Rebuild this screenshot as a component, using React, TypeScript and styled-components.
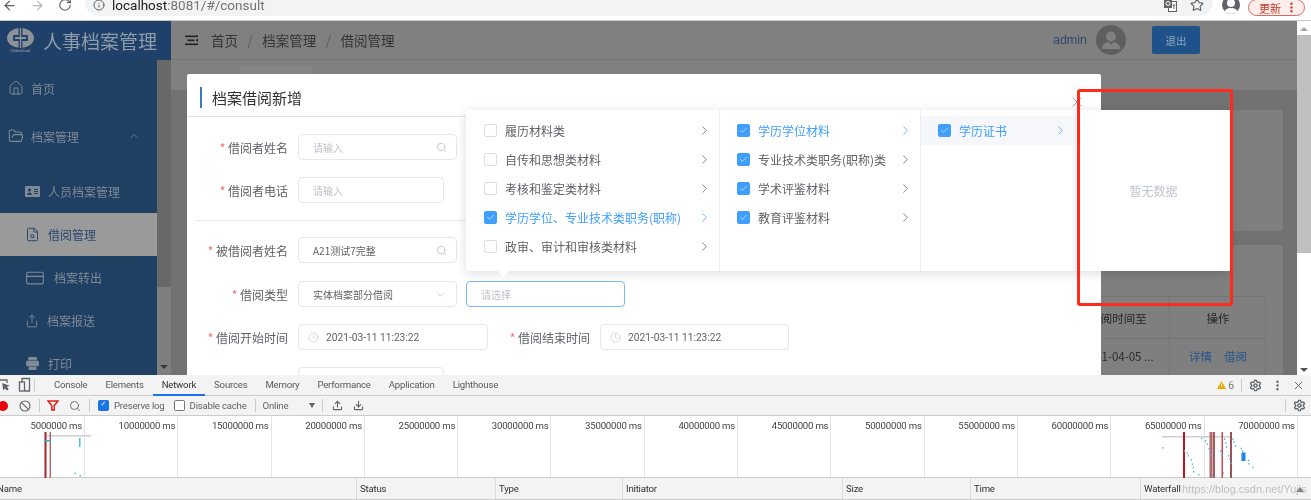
import React from "react";
import styled, { createGlobalStyle } from "styled-components";
import {
  ArrowLeft,
  ArrowRight,
  Ban,
  ChevronDown,
  ChevronRight,
  ChevronUp,
  Clock,
  CreditCard,
  Download,
  FileSearch,
  FolderOpen,
  Home,
  Info,
  MoreVertical,
  RotateCw,
  Search,
  Settings,
  Share,
  Star,
  Upload,
  X,
  Check,
} from "lucide-react";

const GlobalStyle = createGlobalStyle`
  html, body { margin: 0; padding: 0; background: #fff; }
  * { box-sizing: border-box; }
  body { font-family: "Noto Sans CJK SC", "Liberation Sans", sans-serif; }
`;

const Page = styled.div`
  width: 1311px;
  height: 500px;
  display: flex;
  flex-direction: column;
  overflow: hidden;
  position: relative;
  filter: blur(0.45px);
`;

/* browser toolbar */
const ChromeBar = styled.div`
  height: 21px;
  flex: none;
  background: #fff;
  border-bottom: 1px solid #c8c8c8;
  display: flex;
  align-items: flex-start;
  overflow: hidden;
`;
const NavButton = styled.div<{ $off?: boolean }>`
  width: 27.5px;
  height: 10px;
  display: flex;
  align-items: center;
  justify-content: center;
  color: ${(p) => (p.$off ? "#b6b9bd" : "#5f6368")};
  svg {
    flex: none;
  }
`;
const NavGroup = styled.div`
  width: 85px;
  flex: none;
  display: flex;
  margin-left: -4px;
  margin-right: 4px;
`;
const UrlPill = styled.div`
  width: 1128px;
  height: 16px;
  flex: none;
  background: #f1f3f4;
  border-radius: 0 0 14px 14px;
  display: flex;
  align-items: center;
  justify-content: space-between;
  padding: 0 9px 6px 8px;
  color: #5f6368;
  overflow: hidden;
`;
const UrlLeft = styled.div`
  display: flex;
  align-items: center;
  gap: 7px;
`;
const UrlText = styled.span`
  font-family: "Roboto", sans-serif;
  font-size: 13.5px;
  line-height: 10px;
  color: #70757a;
  b {
    font-weight: 400;
    color: #202124;
  }
`;
const UrlRight = styled.div`
  display: flex;
  align-items: center;
  gap: 13px;
`;
const ProfileDot = styled.div`
  width: 18px;
  height: 18px;
  margin: -4px 8px 0 9px;
  border-radius: 50%;
  background: #5f6368;
  flex: none;
  position: relative;
  overflow: hidden;
  &::before {
    content: "";
    position: absolute;
    left: 5px;
    top: 3px;
    width: 8px;
    height: 8px;
    border-radius: 50%;
    background: #fff;
  }
  &::after {
    content: "";
    position: absolute;
    left: 2px;
    top: 12px;
    width: 14px;
    height: 10px;
    border-radius: 50%;
    background: #fff;
  }
`;
const UpdatePill = styled.div`
  width: 57px;
  height: 17px;
  margin-top: -1px;
  flex: none;
  border: 1px solid #d9695f;
  border-radius: 9px;
  background: #fdeeec;
  color: #c5392c;
  font-size: 11px;
  line-height: 14px;
  display: flex;
  align-items: center;
  justify-content: space-between;
  padding: 0 6px 0 10px;
  svg {
    flex: none;
  }
`;

/* dimmed application */
const Workspace = styled.div`
  height: 354px;
  flex: none;
  display: flex;
  position: relative;
  overflow: hidden;
  background: #808080;
`;
const Sidebar = styled.aside`
  width: 171px;
  flex: none;
  display: flex;
  flex-direction: column;
`;
const LogoBar = styled.div`
  height: 39px;
  flex: none;
  background: #1f4068;
  display: flex;
  align-items: center;
  padding-left: 7px;
  gap: 9px;
`;
const LogoMark = styled.div`
  width: 27px;
  display: flex;
  flex-direction: column;
  align-items: center;
  color: #8c9298;
  span {
    font-family: "Liberation Sans", sans-serif;
    font-size: 4px;
    line-height: 5px;
    font-weight: 700;
    white-space: nowrap;
  }
`;
const LogoTitle = styled.div`
  font-size: 19px;
  color: #8f9cab;
  white-space: nowrap;
`;
const SideBody = styled.div`
  flex: 1;
  display: flex;
  min-height: 0;
`;
const Menu = styled.nav`
  width: 157px;
  flex: none;
  background: #1f3f63;
  padding-top: 4px;
`;
const MenuItem = styled.div`
  height: 48px;
  display: flex;
  align-items: center;
  padding: 0 17px 0 8px;
  gap: 7px;
  color: #7f8a96;
  font-size: 12px;
  svg {
    flex: none;
  }
`;
const MenuCaret = styled.span`
  margin-left: auto;
  display: flex;
`;
const SubMenu = styled.div`
  margin-top: 10px;
`;
const SubItem = styled.div<{ $active?: boolean; $wide?: boolean }>`
  height: 43px;
  display: flex;
  align-items: center;
  padding-left: 25px;
  gap: ${(p) => (p.$wide ? "9px" : "8px")};
  font-size: 12px;
  color: ${(p) => (p.$active ? "#27476b" : "#7f8a96")};
  background: ${(p) => (p.$active ? "#9a9a9a" : "transparent")};
  svg {
    flex: none;
  }
`;
const SideScroll = styled.div`
  width: 14px;
  flex: none;
  display: flex;
  flex-direction: column;
`;
const SideThumb = styled.div`
  height: 227px;
  flex: none;
  background: #686868;
`;
const SideTrack = styled.div`
  flex: 1;
  background: #7f7f7f;
  display: flex;
  align-items: flex-end;
  justify-content: center;
  padding-bottom: 6px;
`;
const ArrowDown = styled.i`
  width: 0;
  height: 0;
  border-left: 4px solid transparent;
  border-right: 4px solid transparent;
  border-top: 4px solid #3a3a3a;
`;

const Main = styled.main`
  flex: 1;
  min-width: 0;
  display: flex;
  flex-direction: column;
`;
const TopBar = styled.header`
  height: 39px;
  flex: none;
  background: #808080;
  border-bottom: 1px solid #767676;
  display: flex;
  align-items: center;
  padding-left: 14px;
`;
const Crumbs = styled.div`
  display: flex;
  align-items: center;
  margin-left: 13px;
  font-size: 13.5px;
  color: #333;
  gap: 9.5px;
  i {
    font-style: normal;
    color: #5a5a5a;
  }
`;
const UserBox = styled.div`
  margin-left: auto;
  display: flex;
  align-items: center;
  margin-right: 97px;
`;
const UserName = styled.span`
  font-family: "Liberation Sans", sans-serif;
  font-size: 12.5px;
  color: #2f4a6d;
  margin-right: 9px;
`;
const Avatar = styled.div`
  width: 30px;
  height: 30px;
  border-radius: 50%;
  background: #5e5e5e;
  overflow: hidden;
  margin-right: 26px;
`;
const LogoutButton = styled.div`
  width: 48px;
  height: 28px;
  border-radius: 2px;
  background: #1f5288;
  color: #8ea6c2;
  font-size: 10.5px;
  display: flex;
  align-items: center;
  justify-content: center;
`;
const TabStrip = styled.div`
  height: 30px;
  flex: none;
  background: #808080;
  padding: 5px 0 0 69px;
`;
const GhostTab = styled.div`
  width: 72px;
  height: 25px;
  background: #858585;
  border-radius: 3px 3px 0 0;
`;
const Content = styled.div`
  flex: 1;
  min-height: 0;
  background: #727272;
  padding: 20px 14px 0 16px;
  display: flex;
  flex-direction: column;
  gap: 14px;
`;
const Card = styled.section<{ $h?: number }>`
  background: #7f7f7f;
  border-radius: 3px;
  flex: ${(p) => (p.$h ? "none" : "1")};
  height: ${(p) => (p.$h ? `${p.$h}px` : "auto")};
  padding: 51px 17px 0 0;
  display: flex;
  justify-content: flex-end;
`;
const Table = styled.div`
  width: 200px;
  display: grid;
  grid-template-columns: 103px 97px;
  grid-template-rows: 42px 60px;
  border-top: 1px solid #747474;
  border-right: 1px solid #747474;
`;
const Cell = styled.div<{ $head?: boolean }>`
  display: flex;
  align-items: ${(p) => (p.$head ? "center" : "flex-start")};
  padding-top: ${(p) => (p.$head ? "0" : "9px")};
  justify-content: center;
  gap: 12px;
  border-left: 1px solid #747474;
  border-bottom: 1px solid #747474;
  font-size: 11.5px;
  color: ${(p) => (p.$head ? "#262626" : "#2b2b2b")};
  white-space: nowrap;
  overflow: hidden;
`;
const TableLink = styled.span`
  color: #25558c;
`;
const PageScroll = styled.div`
  width: 14px;
  flex: none;
  background: #fff;
  display: flex;
  flex-direction: column;
  align-items: center;
`;
const PageThumb = styled.div`
  width: 14px;
  height: 218px;
  margin-top: 14px;
  background: #bfbfbf;
`;
const ArrowUpSmall = styled.i`
  position: absolute;
  top: 6px;
  width: 0;
  height: 0;
  border-left: 4px solid transparent;
  border-right: 4px solid transparent;
  border-bottom: 4px solid #a3a3a3;
`;
const ArrowDownSmall = styled(ArrowDown)`
  position: absolute;
  bottom: 3px;
  border-top-color: #505050;
`;

/* modal */
const Modal = styled.div`
  position: absolute;
  left: 187px;
  top: 53px;
  width: 914px;
  height: 340px;
  background: #fff;
  border-radius: 2px;
`;
const ModalHead = styled.div`
  height: 43px;
  border-bottom: 1px solid #dfe2e8;
  display: flex;
  align-items: center;
  padding: 4px 0 0 13px;
  font-size: 15px;
  color: #303133;
  &::before {
    content: "";
    width: 2px;
    height: 21px;
    background: #3f79c0;
    margin-right: 10px;
  }
`;
const Form = styled.div`
  padding-top: 17px;
`;
const Row = styled.div<{ $after?: number }>`
  height: 26px;
  margin-bottom: ${(p) => p.$after ?? 17}px;
  display: flex;
  align-items: center;
`;
const Label = styled.label<{ $w?: number }>`
  width: ${(p) => p.$w ?? 101}px;
  flex: none;
  text-align: right;
  font-size: 12px;
  color: #606266;
  white-space: nowrap;
  &::before {
    content: "* ";
    color: #f56c6c;
  }
`;
const Divider = styled.div`
  height: 1px;
  background: #e6e8ec;
  margin: 1px 8px 16px;
`;
const Field = styled.div<{ $w: number; $focus?: boolean; $gap?: number; $muted?: boolean }>`
  width: ${(p) => p.$w}px;
  height: 26px;
  flex: none;
  margin-left: ${(p) => p.$gap ?? 10}px;
  border: 1px solid ${(p) => (p.$focus ? "#7db8f5" : "#e4e7ed")};
  border-radius: 4px;
  display: flex;
  align-items: center;
  padding: 0 9px 0 14px;
  font-size: 10px;
  color: ${(p) => (p.$muted ? "#bcc0c8" : "#606266")};
  white-space: nowrap;
  svg {
    flex: none;
  }
`;
const FieldEnd = styled.span`
  margin-left: auto;
  display: flex;
  color: #c0c4cc;
`;
const DateField = styled(Field)`
  padding-left: 9px;
  gap: 7px;
  font-family: "Roboto", sans-serif;
  font-size: 10.2px;
  color: #606266;
`;
const CloseIcon = styled.div`
  position: absolute;
  left: 1069px;
  top: 73px;
  display: flex;
  color: #858585;
`;

/* cascader popper */
const Cascader = styled.div`
  position: absolute;
  left: 466px;
  top: 89px;
  width: 765px;
  height: 161px;
  background: #fff;
  border-radius: 3px;
  box-shadow: 0 2px 12px rgba(0, 0, 0, 0.14);
  display: flex;
  &::after {
    content: "";
    position: absolute;
    left: 33px;
    bottom: -4px;
    width: 9px;
    height: 9px;
    background: #fff;
    transform: rotate(45deg);
  }
`;
const CasColumn = styled.div<{ $w?: number }>`
  width: ${(p) => (p.$w ? `${p.$w}px` : "auto")};
  flex: ${(p) => (p.$w ? "none" : "1")};
  padding-top: 6px;
  border-right: 1px solid #eceef2;
  &:last-child {
    border-right: 0;
  }
`;
const CasRow = styled.div<{ $active?: boolean; $hover?: boolean; $pad: number }>`
  height: 29px;
  display: flex;
  align-items: center;
  padding: 0 7px 0 ${(p) => p.$pad}px;
  gap: 8px;
  font-size: 12px;
  white-space: nowrap;
  color: ${(p) => (p.$active ? "#409eff" : "#606266")};
  background: ${(p) => (p.$hover ? "#f5f7fa" : "transparent")};
`;
const CasArrow = styled.span`
  margin-left: auto;
  display: flex;
`;
const Box = styled.span<{ $on?: boolean }>`
  width: 13px;
  height: 13px;
  flex: none;
  border-radius: 2px;
  border: 1px solid ${(p) => (p.$on ? "#409eff" : "#dcdfe6")};
  background: ${(p) => (p.$on ? "#409eff" : "#fff")};
  display: flex;
  align-items: center;
  justify-content: center;
  color: #fff;
`;
const EmptyColumn = styled(CasColumn)`
  display: flex;
  align-items: center;
  justify-content: center;
  padding: 0;
  font-size: 12px;
  color: #c0c4cc;
`;
const RedBox = styled.div`
  position: absolute;
  left: 1077px;
  top: 68px;
  width: 156px;
  height: 217px;
  border: 3px solid #ff2a1a;
  border-radius: 3px;
  pointer-events: none;
`;

/* devtools */
const Devtools = styled.div`
  flex: 1;
  min-height: 0;
  display: flex;
  flex-direction: column;
  position: relative;
  background: #f3f3f3;
  font-family: "Roboto", "Liberation Sans", sans-serif;
  font-size: 9.6px;
  letter-spacing: -0.2px;
  color: #5a5a5a;
`;
const DevTabs = styled.div`
  height: 21px;
  flex: none;
  display: flex;
  align-items: stretch;
  border-bottom: 1px solid #ccc;
`;
const DevIcons = styled.div`
  width: 45px;
  flex: none;
  display: flex;
  align-items: center;
`;
const Sep = styled.i<{ $h?: number }>`
  width: 1px;
  height: ${(p) => p.$h ?? 13}px;
  background: #ccc;
  flex: none;
`;
const DevTab = styled.div<{ $active?: boolean }>`
  padding: 0 9px;
  margin-bottom: -1px;
  display: flex;
  align-items: center;
  color: ${(p) => (p.$active ? "#333" : "#5a5a5a")};
  border-bottom: 2px solid ${(p) => (p.$active ? "#1a73e8" : "transparent")};
`;
const DevRight = styled.div`
  margin-left: auto;
  display: flex;
  align-items: center;
  color: #5f6368;
`;
const WarnCount = styled.span`
  display: flex;
  align-items: center;
  gap: 2px;
  margin-right: 7px;
  font-size: 10.5px;
  color: #777;
`;
const DevToolbar = styled.div`
  height: 20px;
  flex: none;
  display: flex;
  align-items: center;
  border-bottom: 1px solid #ccc;
  color: #5f6368;
`;
const ToolGap = styled.span<{ $l?: number; $r?: number }>`
  display: flex;
  align-items: center;
  margin-left: ${(p) => p.$l ?? 0}px;
  margin-right: ${(p) => p.$r ?? 0}px;
`;
const RecordDot = styled.i`
  width: 10px;
  height: 10px;
  margin-left: -2px;
  border-radius: 50%;
  background: #e8000d;
  flex: none;
`;
const CheckLabel = styled.label<{ $on?: boolean }>`
  display: flex;
  align-items: center;
  gap: 5px;
  white-space: nowrap;
  &::before {
    content: "${(p) => (p.$on ? "✓" : "")}";
    width: 9px;
    height: 9px;
    border-radius: 1.5px;
    border: 1px solid ${(p) => (p.$on ? "#1a73e8" : "#777")};
    background: ${(p) => (p.$on ? "#1a73e8" : "#fff")};
    color: #fff;
    font-family: "DejaVu Sans", sans-serif;
    font-size: 7px;
    line-height: 7px;
    text-align: center;
    letter-spacing: 0;
  }
`;
const OnlineCaret = styled.i`
  width: 0;
  height: 0;
  border-left: 3.5px solid transparent;
  border-right: 3.5px solid transparent;
  border-top: 5px solid #5f6368;
`;
const Timeline = styled.div`
  height: 62px;
  flex: none;
  background: #fff;
  position: relative;
  display: grid;
  grid-template-columns: 85px repeat(13, 93.3px);
  border-bottom: 1px solid #ccc;
`;
const Tick = styled.div`
  border-right: 1px solid #e4e4e4;
  text-align: right;
  padding: 4px 2px 0 0;
  color: #444;
  white-space: nowrap;
`;
const TimelineMarks = styled.svg`
  position: absolute;
  left: 0;
  top: 0;
`;
const NetHead = styled.div`
  flex: 1;
  display: grid;
  grid-template-columns: 356px 139px 127px 220px 128px 170px 1fr;
  background: #f3f3f3;
  border-bottom: 1px solid #ccc;
`;
const NetCol = styled.div`
  display: flex;
  align-items: center;
  padding-left: 3px;
  border-left: 1px solid #ddd;
  color: #333;
  &:first-child {
    border-left: 0;
    padding-left: 0;
    margin-left: -3px;
  }
`;
const Watermark = styled.div`
  position: absolute;
  left: 1182px;
  bottom: 5px;
  font-family: "Liberation Sans", sans-serif;
  font-size: 11px;
  letter-spacing: 0;
  color: rgba(120, 120, 120, 0.42);
  white-space: nowrap;
`;
const SortArrow = styled.i`
  position: absolute;
  right: 7px;
  bottom: 8px;
  width: 0;
  height: 0;
  border-left: 4px solid transparent;
  border-right: 4px solid transparent;
  border-bottom: 5px solid #888;
`;

const LEFT_ITEMS = [
  { label: "履历材料类" },
  { label: "自传和思想类材料" },
  { label: "考核和鉴定类材料" },
  { label: "学历学位、专业技术类职务(职称)", on: true, active: true },
  { label: "政审、审计和审核类材料" },
];
const MID_ITEMS = [
  { label: "学历学位材料", active: true },
  { label: "专业技术类职务(职称)类" },
  { label: "学术评鉴材料" },
  { label: "教育评鉴材料" },
];
const TABS = ["Console", "Elements", "Network", "Sources", "Memory", "Performance", "Application", "Lighthouse"];
const TICKS = Array.from({ length: 14 }, (_, i) => `${(i + 1) * 5000000} ms`);

// zoomed coordinates of the request dots on the right of the overview
const DOTS = [
  [487, 216], [603, 188], [615, 195], [620, 205], [625, 218], [628, 228], [633, 240], [635, 298],
  [552, 225], [560, 232], [563, 240], [572, 252], [575, 265], [578, 275], [579, 288], [595, 297],
  [660, 225], [664, 238], [668, 292], [672, 190], [676, 202], [678, 214], [684, 240], [688, 250],
  [692, 262], [697, 190], [700, 198], [705, 210], [722, 218], [726, 226], [744, 254], [745, 264], [757, 275],
];

const Cb = ({ on }: { on?: boolean }) => (
  <Box $on={on}>{on && <Check size={9} strokeWidth={1.6} />}</Box>
);

const Clock12 = () => <Clock size={11} color="#c0c4cc" strokeWidth={1.4} />;

const Chevron = () => (
  <CasArrow><ChevronRight size={15} strokeWidth={1.2} /></CasArrow>
);

export default function App() {
  return (
    <Page>
      <GlobalStyle />
      <ChromeBar>
        <NavGroup>
          <NavButton><ArrowLeft size={15} strokeWidth={2} /></NavButton>
          <NavButton $off><ArrowRight size={15} strokeWidth={2} /></NavButton>
          <NavButton><RotateCw size={14} strokeWidth={2} /></NavButton>
        </NavGroup>
        <UrlPill>
          <UrlLeft>
            <Info size={12} strokeWidth={2} />
            <UrlText><b>localhost</b>:8081/#/consult</UrlText>
          </UrlLeft>
          <UrlRight>
            <svg width="13" height="13" viewBox="0 0 13 13">
              <rect x="4.500" y="2.500" width="8" height="10" fill="#fff" stroke="#5f6368" />
              <rect x="0" y="0" width="8" height="9" fill="#5f6368" />
              <circle cx="4" cy="4.500" r="2" fill="none" stroke="#fff" />
              <path d="M8.500 6h3M10 6v4" stroke="#5f6368" fill="none" />
            </svg>
            <Star size={14} strokeWidth={2} />
          </UrlRight>
        </UrlPill>
        <ProfileDot />
        <UpdatePill>
          更新
          <MoreVertical size={13} strokeWidth={2.4} />
        </UpdatePill>
      </ChromeBar>

      <Workspace>
        <Sidebar>
          <LogoBar>
            <LogoMark>
              <svg width="27" height="20" viewBox="0 0 27 20">
                <ellipse cx="13.5" cy="10" rx="13.5" ry="10" fill="#8c9298" />
                <rect x="6" y="7" width="15" height="6" rx="1" fill="#1f4068" />
                <rect x="11.5" y="0" width="4" height="20" fill="#1f4068" />
                <rect x="8" y="9" width="11" height="2" fill="#8c9298" />
                <rect x="12.8" y="0" width="1.4" height="20" fill="#8c9298" />
              </svg>
              <span>ChinaCoal</span>
            </LogoMark>
            <LogoTitle>人事档案管理</LogoTitle>
          </LogoBar>
          <SideBody>
            <Menu>
              <MenuItem><Home size={16} strokeWidth={1.5} />首页</MenuItem>
              <MenuItem>
                <FolderOpen size={16} strokeWidth={1.7} />
                档案管理
                <MenuCaret><ChevronUp size={12} strokeWidth={1.5} /></MenuCaret>
              </MenuItem>
              <SubMenu>
                <SubItem>
                  <svg width="15" height="11" viewBox="0 0 15 11">
                    <rect width="15" height="11" rx="1" fill="#7f8a96" />
                    <circle cx="4.500" cy="4" r="1.600" fill="#1f3f63" />
                    <path d="M2 9c.4-2 1.400-2.600 2.500-2.600S6.600 7 7 9z" fill="#1f3f63" />
                    <path d="M9 3.500h4M9 5.500h4M9 7.500h4" stroke="#1f3f63" />
                  </svg>
                  人员档案管理
                </SubItem>
                <SubItem $active><FileSearch size={15} strokeWidth={1.6} />借阅管理</SubItem>
                <SubItem $wide><CreditCard size={20} strokeWidth={1.3} />档案转出</SubItem>
                <SubItem><Share size={14} strokeWidth={1.6} />档案报送</SubItem>
                <SubItem>
                  <svg width="15" height="15" viewBox="0 0 15 15" fill="#7f8a96">
                    <rect x="3" y="1" width="9" height="3" rx="1" />
                    <rect x="1" y="4.500" width="13" height="6" rx="2" />
                    <rect x="3.500" y="11" width="8" height="3" rx="1" />
                  </svg>
                  打印
                </SubItem>
              </SubMenu>
            </Menu>
            <SideScroll>
              <SideThumb />
              <SideTrack><ArrowDown /></SideTrack>
            </SideScroll>
          </SideBody>
        </Sidebar>

        <Main>
          <TopBar>
            <svg width="13" height="11" viewBox="0 0 13 11" fill="#222">
              <rect x="0" y="0.5" width="13" height="1.6" />
              <rect x="2.5" y="4.5" width="7" height="1.6" />
              <rect x="0" y="8.5" width="13" height="1.6" />
              <path d="M13 3.400v3.600l-2.400-1.800z" />
            </svg>
            <Crumbs>
              <span>首页</span><i>/</i><span>档案管理</span><i>/</i><span>借阅管理</span>
            </Crumbs>
            <UserBox>
              <UserName>admin</UserName>
              <Avatar>
                <svg width="30" height="30" viewBox="0 0 30 30" fill="#808080">
                  <circle cx="15" cy="11.500" r="5" />
                  <path d="M5.500 24c1-5 4.500-7 6.500-7l3 2.500 3-2.500c2 0 5.500 2 6.500 7z" />
                </svg>
              </Avatar>
              <LogoutButton>退出</LogoutButton>
            </UserBox>
          </TopBar>
          <TabStrip><GhostTab /></TabStrip>
          <Content>
            <Card $h={121} />
            <Card>
              <Table>
                <Cell $head>借阅时间至</Cell>
                <Cell $head>操作</Cell>
                <Cell>2021-04-05 ...</Cell>
                <Cell><TableLink>详情</TableLink><TableLink>借阅</TableLink></Cell>
              </Table>
            </Card>
          </Content>
        </Main>

        <PageScroll>
          <ArrowUpSmall />
          <PageThumb />
          <ArrowDownSmall />
        </PageScroll>

        <Modal>
          <ModalHead>档案借阅新增</ModalHead>
          <Form>
            <Row>
              <Label>借阅者姓名</Label>
              <Field $w={159} $muted>请输入<FieldEnd><Search size={11} /></FieldEnd></Field>
            </Row>
            <Row>
              <Label>借阅者电话</Label>
              <Field $w={146} $muted>请输入</Field>
            </Row>
            <Divider />
            <Row $after={18}>
              <Label>被借阅者姓名</Label>
              <Field $w={159}>A21测试7完整<FieldEnd><Search size={11} /></FieldEnd></Field>
            </Row>
            <Row>
              <Label>借阅类型</Label>
              <Field $w={159}>实体档案部分借阅<FieldEnd><ChevronDown size={13} strokeWidth={1.4} /></FieldEnd></Field>
              <Field $w={159} $gap={9} $focus $muted>请选择</Field>
            </Row>
            <Row>
              <Label>借阅开始时间</Label>
              <DateField $w={190}><Clock12 />2021-03-11 11:23:22</DateField>
              <Label $w={102}>借阅结束时间</Label>
              <DateField $w={189}><Clock12 />2021-03-11 11:23:22</DateField>
            </Row>
            <Row>
              <Label />
              <Field $w={146} />
            </Row>
          </Form>
        </Modal>

        <CloseIcon><X size={16} strokeWidth={1.2} /></CloseIcon>

        <Cascader>
          <CasColumn $w={254}>
            {LEFT_ITEMS.map((item) => (
              <CasRow key={item.label} $pad={18} $active={item.active}>
                <Cb on={item.on} />
                {item.label}
                <Chevron />
              </CasRow>
            ))}
          </CasColumn>
          <CasColumn $w={201}>
            {MID_ITEMS.map((item) => (
              <CasRow key={item.label} $pad={17} $active={item.active}>
                <Cb on />
                {item.label}
                <Chevron />
              </CasRow>
            ))}
          </CasColumn>
          <CasColumn $w={155}>
            <CasRow $pad={17} $active $hover>
              <Cb on />
              学历证书
              <Chevron />
            </CasRow>
          </CasColumn>
          <EmptyColumn>暂无数据</EmptyColumn>
        </Cascader>

        <RedBox />
      </Workspace>

      <Devtools>
        <DevTabs>
          <DevIcons>
            <svg width="34" height="16" viewBox="0 0 34 16" fill="none" stroke="#5f6368" strokeWidth="1.3">
              <path d="M-4 3h11v3M-4 12h4" />
              <path d="M3 7l5 1.700-2 .8 1.800 2.500-1 .7L5 10.300 3.600 12z" fill="#5f6368" />
              <rect x="19.500" y="5" width="5" height="9" />
              <path d="M22 5V1.500h7.500V14H25" />
            </svg>
            <Sep />
          </DevIcons>
          {TABS.map((t) => (
            <DevTab key={t} $active={t === "Network"}>{t}</DevTab>
          ))}
          <DevRight>
            <WarnCount>
              <svg width="9" height="8" viewBox="0 0 9 8">
                <path d="M4.500 0L9 8H0z" fill="#f2a600" />
                <rect x="4" y="2.500" width="1" height="3" fill="#fff" />
              </svg>
              6
            </WarnCount>
            <Sep />
            <ToolGap $l={7} $r={9}><Settings size={13} strokeWidth={2.6} /></ToolGap>
            <ToolGap $r={8}><MoreVertical size={13} strokeWidth={2.4} /></ToolGap>
            <ToolGap $r={6}><X size={13} strokeWidth={1.8} /></ToolGap>
          </DevRight>
        </DevTabs>
        <DevToolbar>
          <RecordDot />
          <ToolGap $l={11} $r={8}><Ban size={12} strokeWidth={2.2} /></ToolGap>
          <Sep />
          <ToolGap $l={7} $r={10}>
            <svg width="12" height="11" viewBox="0 0 12 11" fill="none" stroke="#e0201b" strokeWidth="1.500">
              <path d="M1 1h10L7.200 5.500V10H4.800V5.500z" />
            </svg>
          </ToolGap>
          <ToolGap $r={8}><Search size={12} strokeWidth={1.8} /></ToolGap>
          <Sep />
          <ToolGap $l={8} $r={9}><CheckLabel $on>Preserve log</CheckLabel></ToolGap>
          <ToolGap $r={8}><CheckLabel>Disable cache</CheckLabel></ToolGap>
          <Sep />
          <ToolGap $l={7} $r={21}>Online</ToolGap>
          <ToolGap $r={7}><OnlineCaret /></ToolGap>
          <Sep />
          <ToolGap $l={9} $r={10}><Upload size={11} strokeWidth={2.4} /></ToolGap>
          <Download size={11} strokeWidth={2.4} />
          <DevRight>
            <Sep />
            <ToolGap $l={7} $r={5}><Settings size={13} strokeWidth={2.6} /></ToolGap>
          </DevRight>
        </DevToolbar>
        <Timeline>
          {TICKS.map((t) => (
            <Tick key={t}>{t}</Tick>
          ))}
          <TimelineMarks width="1311" height="62" viewBox="0 0 1311 62">
            <rect x="45" y="19" width="46" height="1.500" fill="#cfcfcf" />
            <rect x="44.500" y="16" width="2" height="46" fill="#a8242a" />
            <rect x="49.500" y="16" width="1.500" height="46" fill="#b56a6e" />
            <rect x="44" y="24" width="7" height="1.500" fill="#35a6c9" />
            <rect x="79" y="22" width="1.500" height="9" fill="#4cc4cf" />
            <rect x="74.500" y="56.500" width="1.500" height="1.500" fill="#4cc4cf" />
            <rect x="79.500" y="59" width="1.500" height="1.500" fill="#4cc4cf" />
            <rect x="1162" y="20" width="70" height="1.500" fill="#cfcfcf" />
            <rect x="1183" y="16" width="2" height="46" fill="#c4141a" />
            <rect x="1209.500" y="16" width="2.500" height="46" fill="#b06a70" />
            <rect x="1212.500" y="16" width="2.500" height="46" fill="#a85a60" />
            <rect x="1221.500" y="16" width="1.500" height="46" fill="#d0484c" />
            <rect x="1230" y="16" width="2" height="46" fill="#9c5058" />
            {DOTS.map(([x, y]) => (
              <rect key={`${x}-${y}`} x={1000 + x / 3} y={y / 3 - 41} width="1.200" height="1.600" fill="#3fbccb" />
            ))}
            <rect x="1241.500" y="36.500" width="4" height="8.500" fill="#1a86e8" />
          </TimelineMarks>
        </Timeline>
        <NetHead>
          <NetCol>Name</NetCol>
          <NetCol>Status</NetCol>
          <NetCol>Type</NetCol>
          <NetCol>Initiator</NetCol>
          <NetCol>Size</NetCol>
          <NetCol>Time</NetCol>
          <NetCol>Waterfall</NetCol>
        </NetHead>
        <SortArrow />
        <Watermark>https://blog.csdn.net/Yujis</Watermark>
      </Devtools>
    </Page>
  );
}
